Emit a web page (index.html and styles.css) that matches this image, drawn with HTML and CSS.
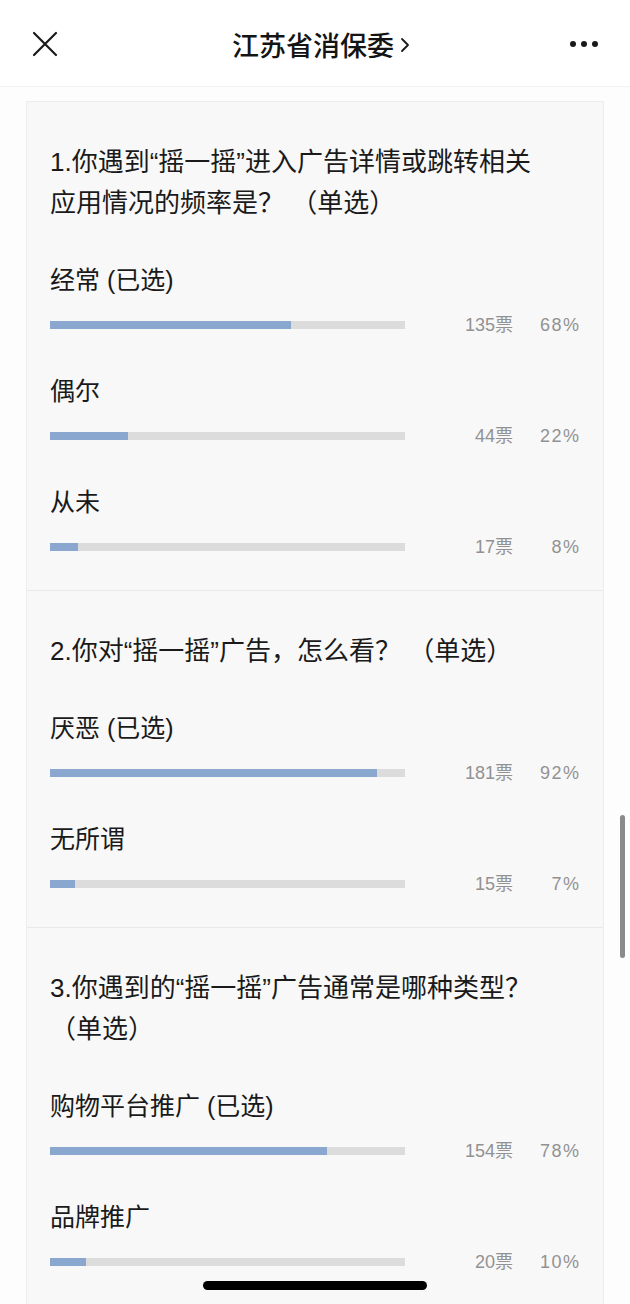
FILE: index.html
```html
<!DOCTYPE html>
<html lang="zh-CN">
<head>
<meta charset="utf-8">
<title>江苏省消保委</title>
<link rel="stylesheet" href="styles.css">
</head>
<body>
<div class="screen">
  <header class="topbar">
    <div class="close">
      <svg width="26" height="26" viewBox="0 0 26 26"><path d="M2 2 L24 24 M24 2 L2 24" stroke="#1a1a1a" stroke-width="2.2" fill="none" stroke-linecap="round"/></svg>
    </div>
    <div class="title">江苏省消保委<svg class="chev" width="10" height="18" viewBox="0 0 10 18"><path d="M2 3 L8 9 L2 15" stroke="#1a1a1a" stroke-width="1.8" fill="none" stroke-linecap="round" stroke-linejoin="round"/></svg></div>
    <div class="more"><span></span><span></span><span></span></div>
  </header>

  <main class="content">
    <div class="card">
      <section class="question">
        <h2 class="q-title">1.你遇到“摇一摇”进入广告详情或跳转相关应用情况的频率是？ （单选）</h2>
        <div class="option">
          <div class="opt-label">经常 (已选)</div>
          <div class="opt-row">
            <div class="bar"><div class="fill" style="width:68%"></div></div>
            <span class="votes">135票</span><span class="pct">68%</span>
          </div>
        </div>
        <div class="option">
          <div class="opt-label">偶尔</div>
          <div class="opt-row">
            <div class="bar"><div class="fill" style="width:22%"></div></div>
            <span class="votes">44票</span><span class="pct">22%</span>
          </div>
        </div>
        <div class="option">
          <div class="opt-label">从未</div>
          <div class="opt-row">
            <div class="bar"><div class="fill" style="width:8%"></div></div>
            <span class="votes">17票</span><span class="pct">8%</span>
          </div>
        </div>
      </section>

      <section class="question">
        <h2 class="q-title">2.你对“摇一摇”广告，怎么看？ （单选）</h2>
        <div class="option">
          <div class="opt-label">厌恶 (已选)</div>
          <div class="opt-row">
            <div class="bar"><div class="fill" style="width:92%"></div></div>
            <span class="votes">181票</span><span class="pct">92%</span>
          </div>
        </div>
        <div class="option">
          <div class="opt-label">无所谓</div>
          <div class="opt-row">
            <div class="bar"><div class="fill" style="width:7%"></div></div>
            <span class="votes">15票</span><span class="pct">7%</span>
          </div>
        </div>
      </section>

      <section class="question">
        <h2 class="q-title">3.你遇到的“摇一摇”广告通常是哪种类型？ （单选）</h2>
        <div class="option">
          <div class="opt-label">购物平台推广 (已选)</div>
          <div class="opt-row">
            <div class="bar"><div class="fill" style="width:78%"></div></div>
            <span class="votes">154票</span><span class="pct">78%</span>
          </div>
        </div>
        <div class="option">
          <div class="opt-label">品牌推广</div>
          <div class="opt-row">
            <div class="bar"><div class="fill" style="width:10%"></div></div>
            <span class="votes">20票</span><span class="pct">10%</span>
          </div>
        </div>
      </section>
    </div>
  </main>

  <div class="scrollbar"></div>
  <div class="home-indicator"></div>
</div>
</body>
</html>
```

FILE: styles.css
```css
* { box-sizing: border-box; }

html, body {
  margin: 0;
  padding: 0;
  background: #ffffff;
}

body {
  font-family: "Liberation Sans", "Noto Sans CJK SC", sans-serif;
  color: #1a1a1a;
}

.screen {
  position: relative;
  width: 630px;
  height: 1304px;
  overflow: hidden;
  background: #fdfdfd;
}

.topbar {
  height: 87px;
  background: #ffffff;
  border-bottom: 1px solid #f1f1f1;
  display: flex;
  align-items: center;
  justify-content: space-between;
  padding: 0 31px 0 32px;
}

.close {
  width: 26px;
  height: 26px;
  display: flex;
  margin-top: 2px;
}

.title {
  font-family: "Noto Sans CJK SC", sans-serif;
  font-size: 27px;
  font-weight: 500;
  color: #141414;
  display: flex;
  align-items: center;
  gap: 6px;
  margin-left: 14px;
  margin-top: 2px;
}

.chev { margin-top: 2px; }

.more {
  display: flex;
  gap: 5px;
  width: 29px;
  margin-top: 2px;
}

.more span {
  width: 6px;
  height: 6px;
  border-radius: 50%;
  background: #1a1a1a;
}

.content {
  padding: 14px 26px 0 26px;
}

.card {
  background: #f8f8f8;
  border: 1px solid #ededed;
}

.question {
  padding: 40px 24px 33px 23px;
  border-top: 1px solid #e9e9e9;
}

.question:first-child {
  border-top: none;
  padding-top: 39.5px;
}

.q-title {
  margin: 0;
  padding-right: 35px;
  font-family: "Liberation Sans", "Noto Sans CJK SC", sans-serif;
  font-weight: 400;
  font-size: 26px;
  line-height: 41px;
  color: #1a1a1a;
}

.option {
  margin-top: 41px;
}

.opt-label {
  font-family: "Liberation Sans", "Noto Sans CJK SC", sans-serif;
  font-size: 25px;
  line-height: 30px;
  color: #1a1a1a;
}

.opt-row {
  margin-top: 20px;
  height: 20px;
  display: grid;
  grid-template-columns: 355px 108px 66px;
  align-items: center;
}

.bar {
  height: 8px;
  background: #dcdcdc;
}

.fill {
  height: 100%;
  background: #8aa7cf;
}

.votes, .pct {
  text-align: right;
  font-family: "Liberation Sans", "Noto Sans CJK SC", sans-serif;
  font-size: 18px;
  line-height: 20px;
  color: #929292;
}

.pct {
  letter-spacing: 1.5px;
  margin-right: -1.5px;
}

.scrollbar {
  position: absolute;
  left: 620px;
  top: 815px;
  width: 5px;
  height: 143px;
  border-radius: 3px;
  background: #8a8a8a;
}

.home-indicator {
  position: absolute;
  left: 203px;
  top: 1281px;
  width: 224px;
  height: 9px;
  border-radius: 5px;
  background: #000000;
}
```
